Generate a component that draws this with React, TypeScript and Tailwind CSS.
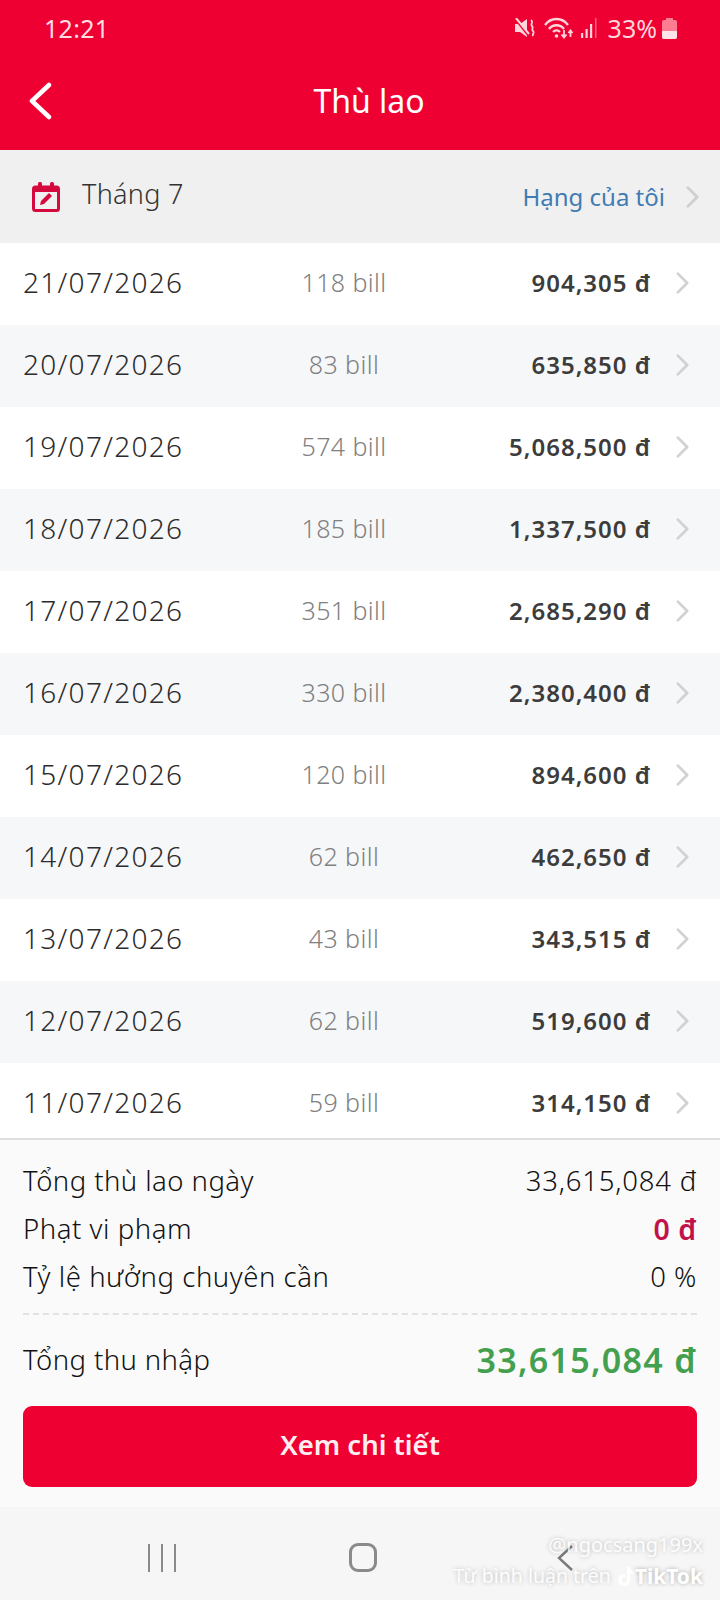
import { FaTiktok } from "react-icons/fa";

const rows = [
  ["21/07/2026", "118 bill", "904,305 đ"],
  ["20/07/2026", "83 bill", "635,850 đ"],
  ["19/07/2026", "574 bill", "5,068,500 đ"],
  ["18/07/2026", "185 bill", "1,337,500 đ"],
  ["17/07/2026", "351 bill", "2,685,290 đ"],
  ["16/07/2026", "330 bill", "2,380,400 đ"],
  ["15/07/2026", "120 bill", "894,600 đ"],
  ["14/07/2026", "62 bill", "462,650 đ"],
  ["13/07/2026", "43 bill", "343,515 đ"],
  ["12/07/2026", "62 bill", "519,600 đ"],
  ["11/07/2026", "59 bill", "314,150 đ"],
];

function Chevron({ className }: { className?: string }) {
  return (
    <svg viewBox="0 0 16 24" fill="none" className={className}>
      <path d="M3 2l10 10L3 22" stroke="currentColor" strokeWidth="3" strokeLinecap="round" strokeLinejoin="round" />
    </svg>
  );
}

function StatusIcons() {
  return (
    <div className="flex items-center text-[#ffd5dc]">
      {/* mute */}
      <svg viewBox="0 0 20 20" className="h-[20px] w-[20px]" fill="none">
        <path d="M0 6h5l7-5v18l-7-5H0z" fill="currentColor" />
        <path d="M2 3l12 15" stroke="#ee0033" strokeWidth="2.400" />
        <path d="M1 0l13 16" stroke="currentColor" strokeWidth="2" />
        <path d="M16 2c3 2-1 4 1 6s-1 3 1 5-1 3 0 5" stroke="currentColor" strokeWidth="1.800" />
      </svg>
      {/* wifi */}
      <svg viewBox="0 0 30 22" className="ml-[9px] h-[22px] w-[30px]" fill="none">
        <path d="M1 8c6-8 17-8 23 0" stroke="currentColor" strokeWidth="2.400" />
        <path d="M5 12c4-5 11-5 15 0" stroke="currentColor" strokeWidth="2.400" />
        <path d="M9 15c2-2 5-2 7 0" stroke="currentColor" strokeWidth="2.400" />
        <circle cx="12.500" cy="19" r="1.800" fill="currentColor" />
        <path d="M20 13v7m-2.500-2.500l2.500 3 2.500-3" stroke="currentColor" strokeWidth="1.800" />
        <path d="M26.500 20v-6m-2 2l2-2.500 2 2.500" stroke="currentColor" strokeWidth="1.800" />
      </svg>
      {/* signal */}
      <svg viewBox="0 0 16 20" className="ml-[7px] h-[20px] w-[16px]" fill="currentColor">
        <rect x="0" y="15" width="2.200" height="5" />
        <rect x="4.500" y="11" width="2.200" height="9" />
        <rect x="9" y="6" width="2.200" height="14" />
        <rect x="14" y="0" width="1.500" height="20" opacity="0.45" />
      </svg>
      <span className="ml-[11px] text-[25px] leading-none">33%</span>
      {/* battery */}
      <svg viewBox="0 0 15 21" className="ml-[5px] h-[21px] w-[15px]">
        <path d="M4 0h7v2h2a2 2 0 012 2v15a2 2 0 01-2 2H2a2 2 0 01-2-2V4a2 2 0 012-2h2z" fill="#ff7d93" />
        <path d="M0 13h15v6a2 2 0 01-2 2H2a2 2 0 01-2-2z" fill="#ffe3e8" />
      </svg>
    </div>
  );
}

export default function App() {
  return (
    <div className="flex h-[1600px] w-[720px] flex-col overflow-hidden bg-white font-['Noto_Sans',sans-serif]">
      {/* HEADER */}
      <header className="h-[150px] shrink-0 bg-[#ee0033] text-white">
        <div className="flex h-[56px] items-center justify-between pl-[44px] pr-[43px]">
          <span className="text-[25px] leading-none tracking-[0.3px] text-[#ffdde3]">12:21</span>
          <StatusIcons />
        </div>
        <div className="relative mt-[15px] flex h-[60px] items-center justify-center pl-[18px]">
          <svg viewBox="0 0 24 38" fill="none" className="absolute left-[28px] top-[11px] h-[38px] w-[24px]">
            <path d="M21 3L4 19l17 16" stroke="currentColor" strokeWidth="4.500" strokeLinecap="round" strokeLinejoin="round" />
          </svg>
          <h1 className="text-[32px] font-normal leading-none">Thù lao</h1>
        </div>
      </header>

      {/* THANG */}
      <div className="flex h-[93px] shrink-0 items-center bg-[#f0f0f0] pl-[32px] pr-[20px]">
        <svg viewBox="0 0 28 30" className="h-[30px] w-[28px]" fill="none">
          <rect x="1.500" y="5" width="25" height="23.500" rx="2" stroke="#d4093d" strokeWidth="3" />
          <rect x="1.500" y="5" width="25" height="5" fill="#d4093d" />
          <rect x="6" y="0" width="4" height="7" rx="1.500" fill="#d4093d" />
          <rect x="18" y="0" width="4" height="7" rx="1.500" fill="#d4093d" />
          <path d="M8 23l1-4 8-8 3 3-8 8z" fill="#d4093d" />
        </svg>
        <span className="mb-[6px] ml-[22px] text-[27px] font-light leading-none tracking-[0.3px] text-[#333]">Tháng 7</span>
        <span className="ml-auto text-[24px] leading-none text-[#3f7cb3]">Hạng của tôi</span>
        <Chevron className="ml-[20px] h-[24px] w-[15px] text-[#cfcfcf]" />
      </div>

      {/* DANH SACH */}
      <div className="h-[897px] shrink-0 overflow-hidden border-b-2 border-[#dedede]">
        {rows.map((row, idx) => (
          <div
            key={idx}
            className={`flex h-[82px] items-center pb-[3px] pl-[23px] pr-[30px] ${idx % 2 === 0 ? "bg-white" : "bg-[#f6f7f9]"}`}
          >
            <span className="mb-[1px] w-[231px] text-[28px] font-light leading-none tracking-[1.300px] text-[#2c2c2c]">{row[0]}</span>
            <span className="w-[180px] text-center text-[25px] font-light leading-none tracking-[0.400px] text-[#808080]">{row[1]}</span>
            <span className="flex-1 text-right text-[24px] font-semibold leading-none tracking-[1px] text-[#3c3c3c]">{row[2]}</span>
            <Chevron className="ml-[24px] h-[24px] w-[15px] text-[#d2d2d2]" />
          </div>
        ))}
      </div>

      {/* TONG KET */}
      <div className="flex h-[367px] shrink-0 flex-col bg-[#fafafa] px-[23px] pt-[17px]">
        <div className="flex h-[48px] items-center justify-between text-[27.500px] font-light tracking-[0.450px] text-[#111]">
          <span>Tổng thù lao ngày</span>
          <span className="tracking-[0.800px]">33,615,084 đ</span>
        </div>
        <div className="flex h-[48px] items-center justify-between text-[27.500px] font-light tracking-[0.550px] text-[#111]">
          <span>Phạt vi phạm</span>
          <span className="text-[28.500px] font-semibold text-[#c2124a]">0 đ</span>
        </div>
        <div className="flex h-[48px] items-center justify-between text-[27.500px] font-light tracking-[0.550px] text-[#111]">
          <span>Tỷ lệ hưởng chuyên cần</span>
          <span>0 %</span>
        </div>
        <div className="mt-[12px] border-t-2 border-dashed border-[#e2e2e2]" />
        <div className="mt-[21px] flex h-[48px] items-center justify-between">
          <span className="text-[27.500px] font-light tracking-[0.400px] text-[#111]">Tổng thu nhập</span>
          <span className="text-[34px] font-semibold tracking-[1.300px] text-[#43a04f]">33,615,084 đ</span>
        </div>
        <button className="mt-[22px] h-[81px] shrink-0 rounded-[9px] bg-[#ee0033] pb-[3px] text-[27.500px] font-semibold text-[#ffeef1]">
          Xem chi tiết
        </button>
      </div>

      {/* NAV ANDROID */}
      <div className="relative flex flex-1 items-center justify-center bg-[#f6f6f6] pt-[8px]">
        <div className="flex items-center">
          <div className="flex h-[28px] w-[28px] justify-between">
            <span className="w-[2px] bg-[#8a8a8a]" />
            <span className="w-[2px] bg-[#8a8a8a]" />
            <span className="w-[2px] bg-[#8a8a8a]" />
          </div>
          <span className="ml-[173px] h-[29px] w-[28px] rounded-[9px] border-[3px] border-[#8a8a8a]" />
          <svg viewBox="0 0 16 26" fill="none" className="ml-[180px] h-[26px] w-[16px]">
            <path d="M15 1L2 13l13 12" stroke="#7a7a7a" strokeWidth="2.400" />
          </svg>
        </div>

        {/* watermark */}
        <div className="absolute right-[17px] top-[25px] flex flex-col items-end text-[#ffffff] [text-shadow:0_0_4px_rgba(0,0,0,0.3)]">
          <span className="text-[20px] leading-[26px] opacity-80">@ngocsang199x</span>
          <span className="mt-[6px] flex items-center text-[19.500px] leading-[24px]">
            <span className="opacity-80">Từ bình luận trên</span>
            <FaTiktok className="ml-[7px] h-[19px] w-[17px]" />
            <span className="text-[21px] font-bold">TikTok</span>
          </span>
        </div>
      </div>
    </div>
  );
}
